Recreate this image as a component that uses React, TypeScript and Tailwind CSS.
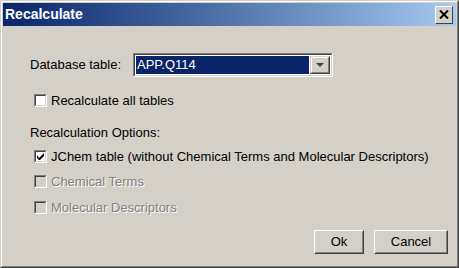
import React from 'react';

const font = { fontFamily: 'Tahoma, "Liberation Sans", Arial, sans-serif' };

function Check({ checked, disabled, label }: { checked?: boolean; disabled?: boolean; label: string }) {
    return (
        <div className="flex items-center h-[20px] pl-[31px]">
            <div className="shrink-0 w-[13px] h-[13px] border border-t-[#808080] border-l-[#808080] border-b-white border-r-white">
                <div
                    className={`w-[11px] h-[11px] border border-t-[#404040] border-l-[#404040] border-b-[#d4d0c8] border-r-[#d4d0c8] flex items-center justify-center ${disabled ? 'bg-[#d4d0c8]' : 'bg-white'}`}
                >
                    {checked && (
                        <svg width="7" height="7" viewBox="0 0 7 7">
                            <path d="M0 2v3l2 2h1l4-4V0L2 5z" fill="#000" />
                        </svg>
                    )}
                </div>
            </div>
            <span
                className={`ml-[4px] text-[13px] leading-none whitespace-nowrap ${disabled ? 'text-[#808080] [text-shadow:1px_1px_0_#ffffff]' : 'text-black'}`}
            >
                {label}
            </span>
        </div>
    );
}

function Button({ label, w }: { label: string; w: string }) {
    return (
        <div className={`${w} h-[24px] border border-t-white border-l-white border-b-[#404040] border-r-[#404040]`}>
            <div className="w-full h-full border border-t-[#d4d0c8] border-l-[#d4d0c8] border-b-[#808080] border-r-[#808080] flex items-center justify-center text-[13px] text-black">
                {label}
            </div>
        </div>
    );
}

export default function App() {
    return (
        <div style={font} className="w-[459px] h-[268px] bg-[#d4d0c8] border border-t-[#d4d0c8] border-l-[#d4d0c8] border-b-[#404040] border-r-[#404040]">
            <div className="w-full h-full border border-t-white border-l-white border-b-[#808080] border-r-[#808080] p-[1px] flex flex-col">
                <div className="h-[23px] flex items-center justify-between pl-[2px] pr-[3px] bg-gradient-to-r from-[#0a246a] to-[#a6caf0]">
                    <span className="text-white font-bold text-[14px]">Recalculate</span>
                    <div className="w-[18px] h-[18px] bg-[#d4d0c8] border border-t-white border-l-white border-b-[#404040] border-r-[#404040] flex items-center justify-center">
                        <svg width="10" height="9" viewBox="0 0 10 9">
                            <path d="M1 0.5 L9 8.5 M9 0.5 L1 8.5" stroke="#000" strokeWidth="2" />
                        </svg>
                    </div>
                </div>

                <div className="flex-1 flex flex-col pt-[27px]">
                    <div className="flex items-center pl-[27px] h-[24px]">
                        <span className="shrink-0 text-[13px] text-black w-[103px]">Database table:</span>
                        <div className="shrink-0 w-[200px] h-[24px] border border-t-[#808080] border-l-[#808080] border-b-white border-r-white">
                            <div className="w-full h-full border border-t-[#404040] border-l-[#404040] border-b-[#d4d0c8] border-r-[#d4d0c8] bg-white flex p-[1px]">
                                <div className="flex-1 bg-[#0a246a] text-white text-[13px] flex items-center pl-[1px]">APP.Q114</div>
                                <div className="ml-[1px] w-[20px] h-full border border-t-[#d4d0c8] border-l-[#d4d0c8] border-b-[#404040] border-r-[#404040] bg-[#d4d0c8]">
                                    <div className="w-full h-full border border-t-white border-l-white border-b-[#808080] border-r-[#808080] flex items-center justify-center">
                                        <svg width="8" height="4" viewBox="0 0 8 4">
                                            <path d="M0 0h8L4 4z" fill="#404040" />
                                        </svg>
                                    </div>
                                </div>
                            </div>
                        </div>
                    </div>

                    <div className="mt-[13px]">
                        <Check label="Recalculate all tables" />
                    </div>

                    <div className="mt-[13px] pl-[27px] h-[20px] flex items-center text-[13px] text-black">Recalculation Options:</div>
                    <div className="mt-[3px]">
                        <Check checked label="JChem table (without Chemical Terms and Molecular Descriptors)" />
                    </div>
                    <div className="mt-[5px]">
                        <Check disabled label="Chemical Terms" />
                    </div>
                    <div className="mt-[6px]">
                        <Check disabled label="Molecular Descriptors" />
                    </div>

                    <div className="flex justify-end gap-[10px] pr-[8px] mt-[13px]">
                        <Button label="Ok" w="w-[50px]" />
                        <Button label="Cancel" w="w-[74px]" />
                    </div>
                </div>
            </div>
        </div>
    );
}
